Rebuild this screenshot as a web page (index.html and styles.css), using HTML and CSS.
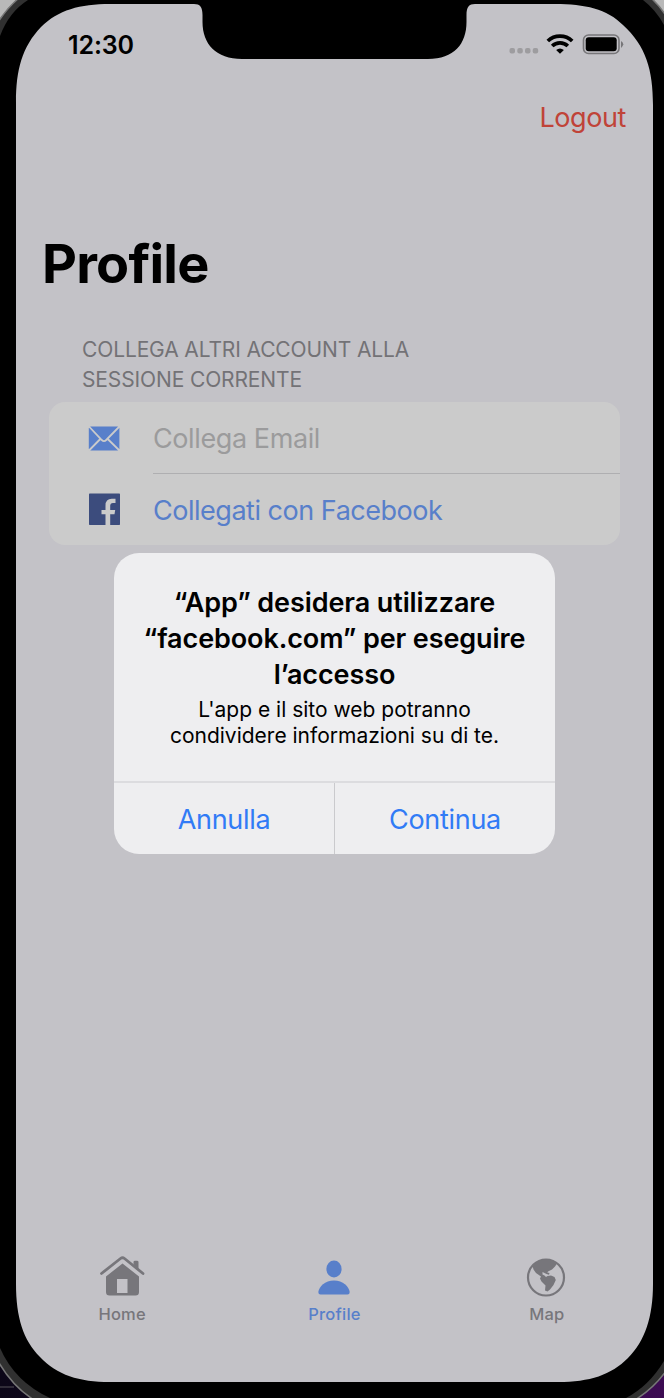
FILE: index.html
```html
<!DOCTYPE html>
<html lang="it">
<head>
<meta charset="utf-8">
<title>Profile</title>
<link rel="stylesheet" href="styles.css">
</head>
<body>
<div class="device">
  <svg class="frame" width="664" height="1398" viewBox="0 0 664 1398" aria-hidden="true">
    <defs>
      <linearGradient id="desk" x1="0" y1="0" x2="1" y2="0"><stop offset="0" stop-color="#0c0718"/><stop offset="1" stop-color="#3c0b52"/></linearGradient>
    </defs>
    <rect width="664" height="700" fill="#b9b9b9"/>
    <rect y="700" width="664" height="698" fill="url(#desk)"/>
    <path d="M0 1387H14" stroke="#302c38" stroke-width="2"/>
    <path d="M19 -2Q8 7 -2 22V1361Q12 1386 34 1400H635Q654 1388 666 1371V16Q660 6 651 -2Z" fill="#303030" stroke="#777" stroke-width="1.500"/>
    <path d="M28 0Q9 12 0 36V1348Q15 1382 50 1398H626Q649 1386 664 1361V25Q656 10 643 0Z" fill="#000"/>
    <path class="screen-fill" d="M110 4H194C200 4 202.500 7 202.500 15V22C202.500 44 216 59 242 59H428C454 59 466.500 44 466.500 22V15C466.500 7 469 4 475 4H555C585 4 607 9 623 25C646 46 653 70 653 105V1284C653 1317 645 1341 628 1358C611 1375 590 1382 558 1382H110C79 1382 57 1375 40 1357C23 1340 16 1317 16 1284V102C16 70 22 47 41 27C58 10 80 4 110 4Z"/>
  </svg>
  <div class="screen">
    <header class="status">
      <span class="clock">12:30</span>
      <svg class="indicators" width="116" height="24" viewBox="0 0 116 24" aria-hidden="true">
        <g fill="#9d9c9f"><rect x="1.500" y="16" width="5.500" height="5.500" rx="2"/><rect x="9.300" y="16" width="5.500" height="5.500" rx="2"/><rect x="17" y="16" width="5.500" height="5.500" rx="2"/><rect x="24.700" y="16" width="5.500" height="5.500" rx="2"/></g>
        <g fill="none" stroke="#000" stroke-width="3.700"><path d="M39.800 9A17.500 17.500 0 0 1 64.200 9"/><path d="M44.200 14A11.200 11.200 0 0 1 59.800 14"/></g>
        <path d="M48.100 18Q52 14.800 55.900 18L52 21.800Z"/>
        <rect x="75.500" y="3" width="35.500" height="18.500" rx="5" fill="none" stroke="#777679" stroke-width="1.600"/>
        <rect x="77.700" y="5.200" width="31" height="14" rx="3"/>
        <path d="M113 9Q117.500 12 113 16Z" fill="#777679"/>
      </svg>
    </header>
    <nav class="navbar"><a class="logout">Logout</a></nav>
    <h1 class="title">Profile</h1>
    <main class="content">
      <h2 class="section">COLLEGA ALTRI ACCOUNT ALLA<br>SESSIONE CORRENTE</h2>
      <div class="list">
        <div class="row">
          <svg class="icon" width="32" height="32" viewBox="0 0 32 32" aria-hidden="true">
            <rect x=".8" y="4.500" width="30.600" height="24" rx="2" fill="#587fca"/>
            <path d="M1 4.500L13.800 18Q16 20.200 18.200 18L31.500 4.500M1 28.500L12.300 17M31.500 28.500L19.700 17" fill="none" stroke="#cbcbcb" stroke-width="1.800"/>
          </svg>
          <span class="label muted">Collega Email</span>
        </div>
        <div class="row">
          <svg class="icon" width="32" height="32" viewBox="0 0 32 32" aria-hidden="true">
            <rect x="1" y=".5" width="31" height="31.500" rx=".7" fill="#3c4c7d"/>
            <path d="M17.500 32V21.200H13.500V17.100H17.500V12.500Q17.500 5.800 23.800 5.800H27.500V9.900H25Q22.200 9.900 22.200 12.800V17.100H27.200L26.500 21.200H22.200V32Z" fill="#cbcbcb"/>
          </svg>
          <span class="label link">Collegati con Facebook</span>
        </div>
      </div>
    </main>
    <footer class="tabs">
      <div class="tab">
        <svg width="48" height="44" viewBox="0 0 48 44" aria-hidden="true">
          <path d="M3.500 18.500L22.500 3.500Q24.500 2 26.500 3.500L45 18.500" fill="none" stroke="#77767b" stroke-width="2.800" stroke-linecap="round"/>
          <path d="M35.500 9V7Q35.500 5.700 37 5.700H39Q40.500 5.700 40.500 7V15Z" fill="#77767b"/>
          <path fill-rule="evenodd" d="M24.500 8.500L41 21.500V37Q41 40.500 37.500 40.500H11.500Q8 40.500 8 37V21.500ZM19 24V38H29.500V24Z" fill="#77767b"/>
        </svg>
        <span>Home</span>
      </div>
      <div class="tab active">
        <svg width="48" height="44" viewBox="0 0 48 44" aria-hidden="true"><g fill="#587fca"><ellipse cx="24" cy="14" rx="7.600" ry="8.500"/><path d="M8.300 37C9 31.500 15 25.500 24 25.500S39 31.500 39.700 37Q39.700 39.500 37.500 39.500H10.500Q8.300 39.500 8.300 37Z"/></g></svg>
        <span>Profile</span>
      </div>
      <div class="tab">
        <svg width="48" height="44" viewBox="0 0 48 44" aria-hidden="true">
          <circle cx="24" cy="22.500" r="18" fill="none" stroke="#77767b" stroke-width="2.200"/>
          <path d="M10.500 11L15 7L23 4L31 5.500L35 8.500L33 11.500L30 14.500L26 16.500L25.300 17.500L27.500 18L27 19.800L24.500 19L20.500 17L20.500 19.500L22.500 20.500L24 22L25.500 21L29 20.500L32.500 22L33.800 25L31.500 30L28 34.500L25.500 36.500L23 35.500L23.500 30.500L19.500 26.500L18 23.500L19 21.500L14 18L11.500 14.500Z" fill="#77767b"/>
        </svg>
        <span>Map</span>
      </div>
    </footer>
  </div>
  <section class="alert" role="dialog">
    <div class="alert-body">
      <h3>“App” desidera utilizzare<br>“facebook.com” per eseguire<br>l’accesso</h3>
      <p>L'app e il sito web potranno<br>condividere informazioni su di te.</p>
    </div>
    <div class="actions"><button>Annulla</button><button>Continua</button></div>
  </section>
</div>
</body>
</html>
```

FILE: styles.css
```css
* { box-sizing: border-box; }
body { margin: 0; font-family: Inter, "Liberation Sans", sans-serif; }
.device { position: relative; display: flex; width: 664px; height: 1398px; overflow: hidden; }
.frame { position: absolute; inset: 0; }
.screen-fill { fill: #c3c2c7; }
.screen {
  position: relative;
  width: 637px;
  height: 1378px;
  margin: 4px 0 0 16px;
  display: flex;
  flex-direction: column;
  overflow: hidden;
}
.status {
  height: 84px;
  padding: 27px 29px 0 52px;
  display: flex;
  justify-content: space-between;
  align-items: flex-start;
}
.clock { font-size: 25px; line-height: 28px; font-weight: 600; letter-spacing: -.1px; }
.indicators { margin-top: 1px; }
.navbar { height: 58px; padding-right: 27px; display: flex; align-items: center; justify-content: flex-end; }
.logout { font-size: 27px; letter-spacing: -.4px; color: #c04338; }
.title { margin: 85px 0 0 26px; font-size: 54px; line-height: 66px; font-weight: 700; letter-spacing: -.8px; }
.content { margin: 38px 33px 0; }
.section { margin: 0 0 8px 33px; font-size: 21px; line-height: 29.500px; font-weight: 400; color: #737276; letter-spacing: -.13px; }
.list { height: 143px; border-radius: 16px; background: #cbcbcb; display: flex; flex-direction: column; }
.row { flex: 1; display: flex; align-items: center; padding-left: 39px; gap: 33px; }
.icon { flex: none; }
.label { flex: 1; height: 100%; display: flex; align-items: center; font-size: 27px; letter-spacing: -.48px; padding-top: 2px; white-space: nowrap; }
.muted { color: #9b9b9c; border-bottom: 1px solid #afafb1; letter-spacing: -.4px; }
.link { color: #587fca; }
.tabs { margin-top: auto; height: 127px; display: grid; grid-template-columns: repeat(3, 1fr); }
.tab { display: flex; flex-direction: column; align-items: center; gap: 5px; font-size: 16.500px; line-height: 20px; font-weight: 500; letter-spacing: .2px; color: #77767b; }
.tab svg { margin-left: -1px; }
.tab.active { color: #587fca; }
.alert {
  position: absolute;
  left: 114px;
  top: 553px;
  width: 441px;
  height: 301px;
  border-radius: 25px;
  background: #eeeef0;
  display: flex;
  flex-direction: column;
  overflow: hidden;
  text-align: center;
}
.alert-body { height: 228px; padding-top: 32px; }
.alert h3 { margin: 0; font-size: 27px; line-height: 36px; font-weight: 600; letter-spacing: -.1px; }
.alert p { margin: 4px 0 0; font-size: 21px; line-height: 26px; letter-spacing: 0; }
.actions { flex: 1; display: grid; grid-template-columns: 220px 221px; border-top: 2px solid #dcdcdf; }
.actions button { border: 0; padding: 1px 0 0; background: none; font: 400 27px Inter, "Liberation Sans", sans-serif; letter-spacing: -.3px; color: #317bf6; }
.actions button + button { border-left: 1px solid #cacacd; }
```
